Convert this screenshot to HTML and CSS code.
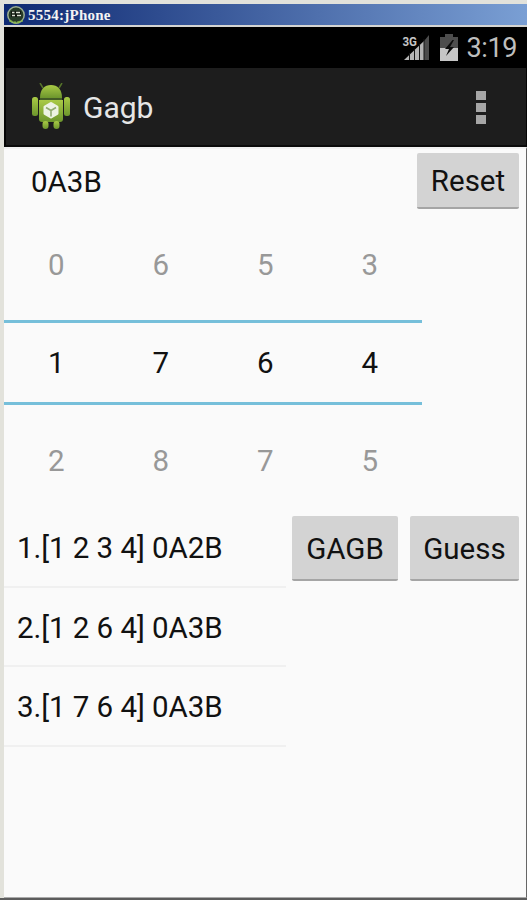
FILE: index.html
```html
<!DOCTYPE html>
<html lang="en">
<head>
<meta charset="utf-8">
<title>5554:jPhone</title>
<link rel="stylesheet" href="styles.css">
</head>
<body>
<div class="window">
  <header class="titlebar">
    <svg class="emu-icon" width="20" height="20" viewBox="0 0 20 20">
      <circle cx="10" cy="10" r="8.2" fill="#263b27" stroke="#9aad90" stroke-width="1.5"/>
      <path d="M5 6h10v6H5z" fill="#11190f"/>
      <path d="M6 7.5h2.5M10 7.5h4M6 10.5h3M11 10.5h4" stroke="#dce3d4" stroke-width="1.5"/>
      <path d="M3.500 15.500q6.500 4 13 0" fill="none" stroke="#88b64c" stroke-width="2" stroke-dasharray="3 1"/>
    </svg>
    <span class="title">5554:jPhone</span>
  </header>
  <div class="statusbar">
    <svg class="signal" width="28" height="28" viewBox="0 0 28 28">
      <path d="M2 26 22 7v19z" fill="#b5b5b5"/>
      <path d="M22 7 27 1v25h-5z" fill="#4c4c4c"/>
      <path d="M7.500 19v7M12.500 15v11M17.500 10v16M22 5v21" stroke="#151515" stroke-width="1"/>
      <text x=".5" y="12" class="network" textLength="14.500" lengthAdjust="spacingAndGlyphs">3G</text>
    </svg>
    <svg class="battery" width="18" height="27" viewBox="0 0 18 27">
      <path d="M0 3h5V0h8v3h5v24H0z" fill="#4d4d4d"/>
      <path d="M0 14h18v13H0z" fill="#c6c6c6"/>
      <path d="M12.500 6 5 15h4l-3 7 8-9h-4l4-7z" fill="#0b0b0b"/>
    </svg>
    <span class="clock">3:19</span>
  </div>
  <div class="actionbar">
    <svg class="app-icon" width="40" height="48" viewBox="0 0 40 48">
      <defs>
        <linearGradient id="g" x2="0" y2="1"><stop stop-color="#a9ca45"/><stop offset="1" stop-color="#6d962d"/></linearGradient>
      </defs>
      <path d="m12 5-3-5M28 5l3-5" stroke="#56742a" stroke-width="1.500"/>
      <g fill="url(#g)">
        <path d="M9 15C9 6 13.500 2 20 2s11 4 11 13z"/>
        <path d="M8 17h24v19q0 3-3 3H11q-3 0-3-3z"/>
        <rect x="1" y="14" width="6" height="19" rx="2.500"/>
        <rect x="33" y="14" width="6" height="19" rx="2.500"/>
        <rect x="11.500" y="38" width="6" height="8" rx="3"/>
        <rect x="22.500" y="38" width="6" height="8" rx="3"/>
      </g>
      <path d="M9 16h22" stroke="#52732a" stroke-width="1.500"/>
      <path d="m20 20.500 6 3.500v6.500l-6 3.500-6-3.500V24z" fill="#edf3e3" stroke="#edf3e3" stroke-width="3" stroke-linejoin="round"/>
      <path d="m15 24.500 5 3 5-3M20 27.500v6" fill="none" stroke="#91ab70" stroke-width="1.600"/>
    </svg>
    <h1 class="app-name">Gagb</h1>
    <div class="overflow"><i></i><i></i><i></i></div>
  </div>
  <main class="content">
    <div class="top">
      <span class="result">0A3B</span>
      <button class="btn reset">Reset</button>
    </div>
    <div class="pickers">
      <div class="row"><span>0</span><span>6</span><span>5</span><span>3</span></div>
      <div class="row selected"><span>1</span><span>7</span><span>6</span><span>4</span></div>
      <div class="row"><span>2</span><span>8</span><span>7</span><span>5</span></div>
    </div>
    <div class="bottom">
      <ul class="history">
        <li>1.[1 2 3 4] 0A2B</li>
        <li>2.[1 2 6 4] 0A3B</li>
        <li>3.[1 7 6 4] 0A3B</li>
      </ul>
      <button class="btn gagb">GAGB</button>
      <button class="btn guess">Guess</button>
    </div>
  </main>
</div>
</body>
</html>
```
FILE: styles.css
```css
* { box-sizing: border-box; }
body {
  margin: 0;
  background: #e2e2db;
  font-family: Roboto, "Liberation Sans", sans-serif;
  color: #111;
}
.window {
  height: 900px;
  padding: 4px 0 0 4px;
  display: flex;
  flex-direction: column;
  border-bottom: 2px solid #5c5c5c;
}
.titlebar {
  height: 21px;
  flex: none;
  display: flex;
  align-items: center;
  gap: 2px;
  padding-left: 2px;
  background: linear-gradient(90deg, #0e2972, #7a9fd4);
}
.title {
  font: bold 15px/20px "Liberation Serif", serif;
  color: #f4f4f4;
  letter-spacing: .25px;
}
.statusbar {
  height: 43px;
  flex: none;
  border-top: 2px solid #d5d5d2;
  background: #000;
  display: flex;
  justify-content: flex-end;
  align-items: center;
  padding-right: 10px;
}
.battery { margin: 0 9px 0 10px; }
.network {
  font: bold 13px Roboto, sans-serif;
  fill: #c5c5c5;
  stroke: #000;
  stroke-width: 2px;
  paint-order: stroke;
}
.clock {
  font-size: 27px;
  line-height: 40px;
  color: #bebebe;
  letter-spacing: -.4px;
}
.actionbar {
  height: 79px;
  flex: none;
  display: flex;
  align-items: center;
  padding: 1px 40px 0 25px;
  background: #1d1d1d;
  border-bottom: 2px solid #0b0b0b;
  border-left: 2px solid #050505;
  border-right: 1px solid #050505;
}
.app-name {
  margin: 2px auto 0 12px;
  font-size: 30px;
  font-weight: 400;
  line-height: 40px;
  color: #e6e6e6;
}
.overflow { display: grid; gap: 3px; }
.overflow i { width: 10px; height: 9px; background: #a6a6a6; }
.content {
  flex: 1;
  background: #fafafa;
  border-top: 2px solid #f1f1f1;
  border-right: 1px solid #666;
  border-bottom: 1px solid #aaa;
  font-size: 29.5px;
}
.top {
  display: flex;
  justify-content: space-between;
  padding: 4px 7px 0 27px;
  height: 75px;
}
.result { line-height: 58px; }
.btn {
  font: inherit;
  color: #111;
  padding: 0;
  border: 0;
  border-bottom: 2px solid #a5a5a5;
  border-radius: 2px;
  background: #d3d3d3;
}
.reset { width: 102px; height: 56px; padding-top: 2px; }
.pickers { width: 418px; }
.row {
  display: grid;
  grid-template-columns: repeat(4, 104.5px);
  height: 96px;
  text-align: center;
  line-height: 83px;
  color: #989898;
}
.row.selected {
  height: 85px;
  border: solid #76bfda;
  border-width: 3px 0;
  line-height: 80px;
  color: #111;
}
.row.selected + .row { line-height: 112px; height: 111px; }
.bottom { display: flex; align-items: flex-start; padding-right: 7px; }
.history {
  list-style: none;
  margin: -8px 6px 0 0;
  padding: 0;
  width: 282px;
}
.history li {
  height: 79.5px;
  padding-left: 13px;
  line-height: 81px;
  letter-spacing: -.05px;
  border-bottom: 2px solid #f0f0f0;
}
.gagb { width: 106px; height: 65px; padding-top: 2px; }
.guess { width: 109px; height: 65px; margin-left: auto; padding-top: 2px; }
```
